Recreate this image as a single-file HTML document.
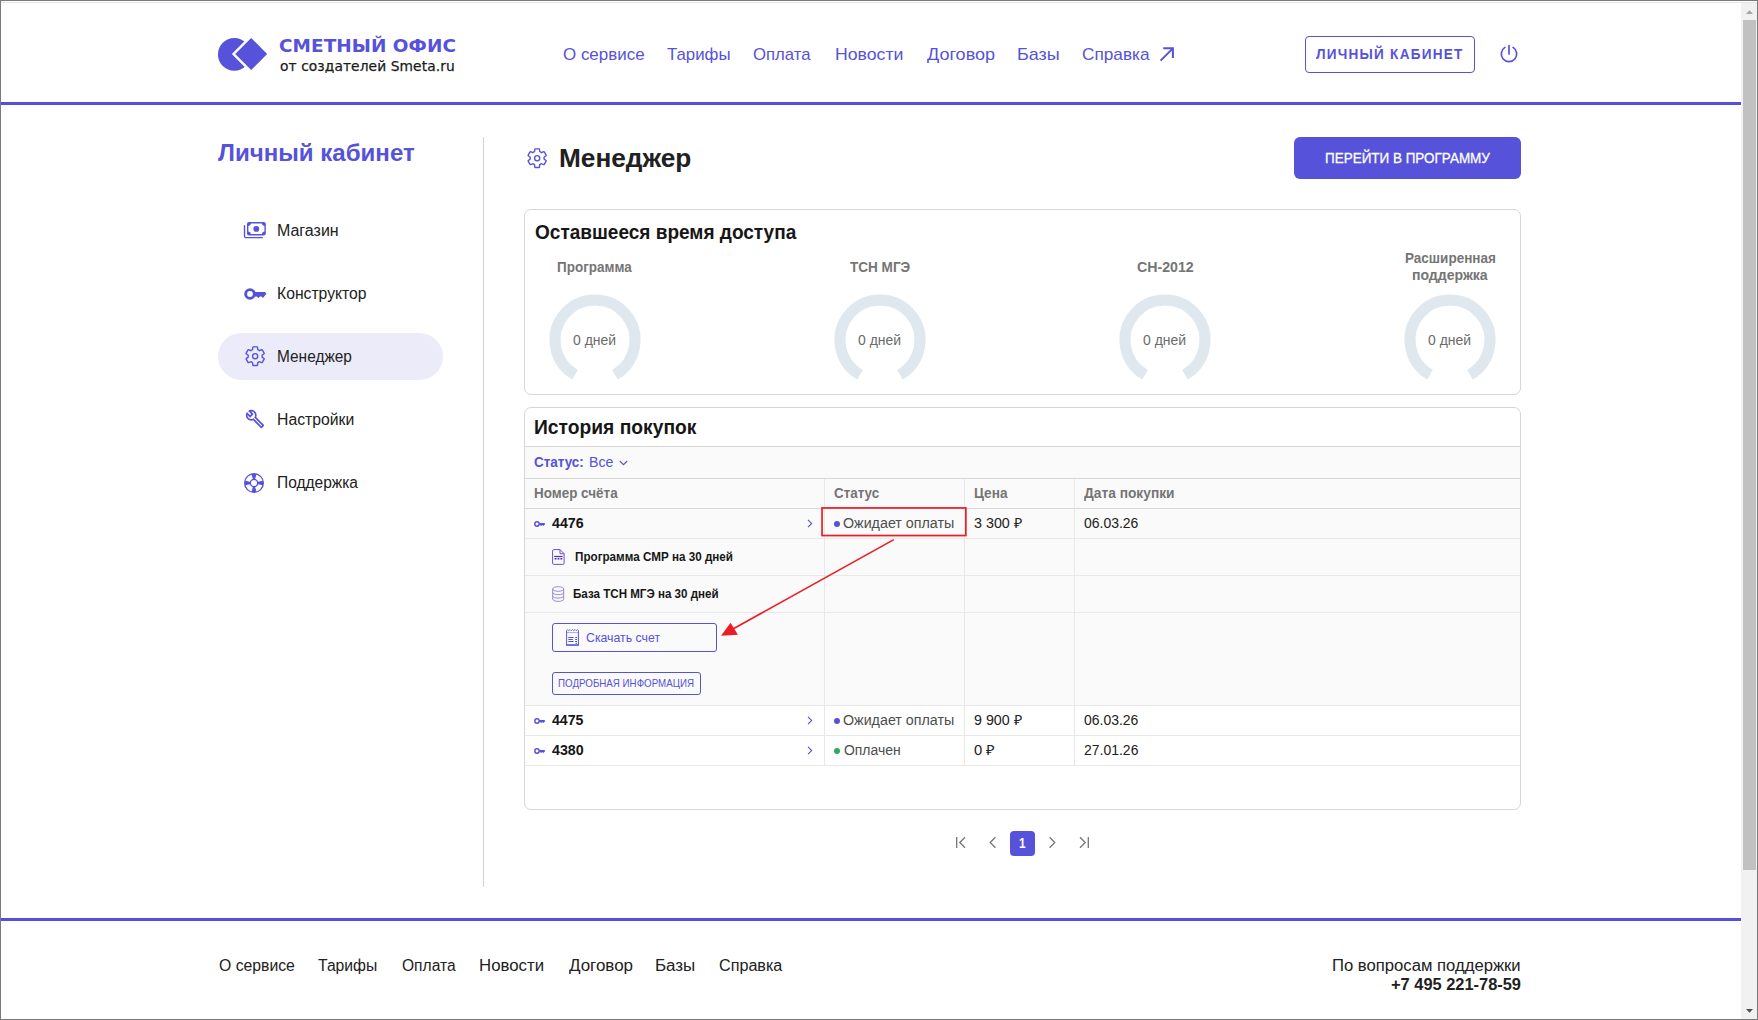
<!DOCTYPE html>
<html lang="ru">
<head>
<meta charset="utf-8">
<title>Сметный офис — Менеджер</title>
<style>
*{box-sizing:border-box;margin:0;padding:0}
html,body{width:1758px;height:1020px;overflow:hidden;background:#fff}
body{position:relative;font-family:"Liberation Sans",sans-serif;color:#212121}
.t{position:absolute;white-space:nowrap;line-height:1;font-weight:400;transform-origin:0 50%}
.b{font-weight:700}
.p{color:#5652d9}
.g{color:#757575}
.w{color:#fff}
.dj{font-family:"DejaVu Sans","Liberation Sans",sans-serif}
.abs{position:absolute}
svg{position:absolute;overflow:visible}
.hline{position:absolute;left:1px;width:1740px;height:3px;background:#5451d8}
.hl{left:0;width:995px;height:1px;background:#e8e8e8}
.vl{top:71px;width:1px;height:287px;background:#e8e8e8}
.dot{width:6px;height:6px;border-radius:50%}

#logo1{font-size:17.4px;top:38.27px;left:278.88px;letter-spacing:0.052px;transform:scaleX(1.0600)}
#logo2{font-size:13.4px;top:59.86px;left:280.34px;letter-spacing:0.091px;transform:scaleX(1.0300)}
#n1{font-size:17px;top:45.71px;left:563.08px;transform:scaleX(0.9972)}
#n2{font-size:17px;top:45.71px;left:667.46px;transform:scaleX(0.9892)}
#n3{font-size:17px;top:45.71px;left:753.48px;transform:scaleX(0.9833)}
#n4{font-size:17px;top:45.71px;left:834.70px;transform:scaleX(1.0390)}
#n5{font-size:17px;top:45.71px;left:926.80px;transform:scaleX(1.0607)}
#n6{font-size:17px;top:45.71px;left:1017.01px;transform:scaleX(1.0580)}
#n7{font-size:17px;top:45.71px;left:1081.96px;transform:scaleX(1.0120)}
#lk{font-size:14px;top:47.05px;left:1315.63px;letter-spacing:1.273px;transform:scaleX(0.9700)}
#sbtitle{font-size:24px;top:140.98px;left:218.44px;transform:scaleX(1.0031)}
#s1{font-size:16px;top:222.56px;left:276.76px;transform:scaleX(0.9985)}
#s2{font-size:16px;top:285.56px;left:276.76px;transform:scaleX(0.9812)}
#s3{font-size:16px;top:348.56px;left:276.77px;transform:scaleX(0.9646)}
#s4{font-size:16px;top:411.56px;left:276.76px;transform:scaleX(0.9845)}
#s5{font-size:16px;top:474.56px;left:276.59px;transform:scaleX(0.9698)}
#title{font-size:26.5px;top:145.37px;left:559.49px;transform:scaleX(0.9899)}
#gobtn{font-size:14px;top:151.05px;left:1324.80px;transform:scaleX(0.9621)}
#c1title{font-size:19.5px;top:223.39px;left:535.07px;transform:scaleX(0.9756)}
#g1l{font-size:14px;top:259.85px;left:557.20px;transform:scaleX(0.9618)}
#g2l{font-size:14px;top:259.85px;left:850.48px;transform:scaleX(0.9682)}
#g3l{font-size:14px;top:259.85px;left:1136.74px;transform:scaleX(1.0129)}
#g4la{font-size:14px;top:251.05px;left:1404.68px;transform:scaleX(0.9642)}
#g4lb{font-size:14px;top:267.85px;left:1412.00px;transform:scaleX(1.0025)}
#g1v{font-size:14px;top:332.65px;left:573.44px;transform:scaleX(0.9962)}
#g2v{font-size:14px;top:332.65px;left:858.44px;transform:scaleX(0.9962)}
#g3v{font-size:14px;top:332.65px;left:1143.44px;transform:scaleX(0.9962)}
#g4v{font-size:14px;top:332.65px;left:1428.44px;transform:scaleX(0.9962)}
#c2title{font-size:19.5px;top:418.49px;left:533.77px;transform:scaleX(0.9874)}
#flt1{font-size:14px;top:454.95px;left:533.64px;transform:scaleX(0.9603)}
#flt2{font-size:14px;top:454.95px;left:589.12px;transform:scaleX(1.0126)}
#th1{font-size:14px;top:486.05px;left:533.79px;transform:scaleX(0.9605)}
#th2{font-size:14px;top:486.05px;left:834.45px;transform:scaleX(0.9581)}
#th3{font-size:14px;top:486.05px;left:973.65px;transform:scaleX(0.9730)}
#th4{font-size:14px;top:486.05px;left:1084.14px;transform:scaleX(0.9823)}
#r1n{font-size:14px;top:516.05px;left:552.37px;transform:scaleX(1.0141)}
#r1s{font-size:14px;top:515.95px;left:843.35px;transform:scaleX(1.0193)}
#r1p{font-size:14px;top:515.95px;left:973.70px;transform:scaleX(1.0213)}
#r1d{font-size:14px;top:515.95px;left:1083.89px;transform:scaleX(0.9980)}
#sub1{font-size:12.5px;top:551.32px;left:575.19px;transform:scaleX(0.9328)}
#sub2{font-size:12.5px;top:587.62px;left:573.31px;transform:scaleX(0.9270)}
#dl{font-size:13px;top:631.00px;left:586.01px;transform:scaleX(0.9470)}
#info{font-size:10.2px;top:678.67px;left:558.23px;transform:scaleX(0.9578)}
#r2n{font-size:14px;top:713.15px;left:552.43px;transform:scaleX(1.0100)}
#r2s{font-size:14px;top:713.15px;left:843.35px;transform:scaleX(1.0193)}
#r2p{font-size:14px;top:713.15px;left:973.76px;transform:scaleX(1.0200)}
#r2d{font-size:14px;top:713.15px;left:1083.88px;transform:scaleX(0.9978)}
#r3n{font-size:14px;top:743.15px;left:552.37px;transform:scaleX(1.0180)}
#r3s{font-size:14px;top:743.15px;left:843.83px;transform:scaleX(0.9941)}
#r3p{font-size:14px;top:743.15px;left:974.45px;transform:scaleX(1.0570)}
#r3d{font-size:14px;top:743.15px;left:1083.87px;transform:scaleX(0.9984)}
#pg1{font-size:14px;top:836.25px;left:1018.60px;transform:scaleX(0.8414)}
#f1{font-size:16px;top:957.76px;left:218.50px;transform:scaleX(0.9849)}
#f2{font-size:16px;top:957.76px;left:318.28px;transform:scaleX(0.9808)}
#f3{font-size:16px;top:957.76px;left:402.32px;transform:scaleX(0.9734)}
#f4{font-size:16px;top:957.76px;left:479.46px;transform:scaleX(1.0496)}
#f5{font-size:16px;top:957.76px;left:568.51px;transform:scaleX(1.0601)}
#f6{font-size:16px;top:957.76px;left:655.46px;transform:scaleX(1.0588)}
#f7{font-size:16px;top:957.76px;left:719.10px;transform:scaleX(1.0089)}
#fs1{font-size:16px;top:957.76px;left:1332.28px;transform:scaleX(1.0413)}
#fs2{font-size:16px;top:976.76px;left:1391.05px;transform:scaleX(1.0252)}
</style>
</head>
<body>
<!-- window frame + scrollbar -->
<div class="abs" style="left:0;top:0;width:1758px;height:1px;background:#7a7a7a"></div>
<div class="abs" style="left:0;top:0;width:1px;height:1020px;background:#7a7a7a"></div>
<div class="abs" style="left:1757px;top:0;width:1px;height:1020px;background:#7a7a7a"></div>
<div class="abs" style="left:0;top:1019px;width:1758px;height:1px;background:#7a7a7a"></div>
<div class="abs" style="left:1px;top:2px;width:1756px;height:1px;background:#e4e6e4"></div>
<div class="abs" id="sbtrack" style="left:1741px;top:3px;width:16px;height:1016px;background:#f1f1f1"></div>
<div class="abs" id="sbthumb" style="left:1743px;top:20px;width:13px;height:850px;background:#c1c1c1"></div>
<svg style="left:1746px;top:10px" width="7" height="4" viewBox="0 0 9 5"><path d="M0 5 L4.5 0.3 L9 5Z" fill="#a3a3a3"/></svg>
<svg style="left:1746px;top:1009px" width="7" height="4" viewBox="0 0 9 5"><path d="M0 0 L4.5 4.7 L9 0Z" fill="#505050"/></svg>

<header>
  <a class="logo">
    <svg style="left:217px;top:37px" width="52" height="34" viewBox="0 0 52 34">
      <circle cx="17.3" cy="17.4" r="16.3" fill="#5652d9"/>
      <path d="M34.2 -2.4 L53.6 17 L34.2 36.4 L14.8 17Z" fill="#fff"/>
      <path d="M34.2 1 L50.2 17 L34.2 33 L18.2 17Z" fill="#5652d9"/>
    </svg>
    <span class="t b p dj" id="logo1">СМЕТНЫЙ ОФИС</span>
    <span class="t dj" id="logo2" style="color:#1b1b1b;-webkit-text-stroke:0.25px #1b1b1b">от создателей Smeta.ru</span>
  </a>
  <nav>
    <a class="t p" id="n1">О сервисе</a>
    <a class="t p" id="n2">Тарифы</a>
    <a class="t p" id="n3">Оплата</a>
    <a class="t p" id="n4">Новости</a>
    <a class="t p" id="n5">Договор</a>
    <a class="t p" id="n6">Базы</a>
    <a class="t p" id="n7">Справка</a>
    <svg style="left:1159px;top:47px" width="16" height="15" viewBox="0 0 16 15"><path d="M1.6 13.6 L13.6 1.6 M4.2 1.3 H13.9 V11" fill="none" stroke="#5652d9" stroke-width="2"/></svg>
  </nav>
  <a class="abs" style="left:1305px;top:36px;width:170px;height:37px;border:1px solid #5652d9;border-radius:4px"></a>
  <span class="t b p" id="lk">ЛИЧНЫЙ КАБИНЕТ</span>
  <svg style="left:1498.8px;top:44px" width="20" height="20" viewBox="0 0 20 20"><path d="M5.9 3.4 A7.7 7.7 0 1 0 14.1 3.4" fill="none" stroke="#5652d9" stroke-width="1.7" stroke-linecap="round"/><path d="M10 1.5 V10" stroke="#5652d9" stroke-width="1.7" stroke-linecap="round"/></svg>
  <div class="hline" style="top:102px"></div>
</header>
<aside>
  <h2 class="t b p" id="sbtitle">Личный кабинет</h2>
  <div class="abs" style="left:218px;top:333px;width:225px;height:47px;border-radius:24px;background:#ecebfa"></div>
  <ul style="list-style:none">
    <li><svg style="left:243px;top:221px" width="24" height="19" viewBox="0 0 24 19"><rect x="4.7" y="1.7" width="17.4" height="12.1" rx="1.6" fill="none" stroke="#5652d9" stroke-width="1.4"/><path d="M4.7 1.7h3.2a3.2 3.2 0 0 1-3.2 3.2zM22.1 1.7v3.2a3.2 3.2 0 0 1-3.2-3.2zM4.7 13.8v-3.2a3.2 3.2 0 0 1 3.2 3.2zM22.1 13.8h-3.2a3.2 3.2 0 0 1 3.2-3.2z" fill="#5652d9"/><circle cx="13.3" cy="7.9" r="2.9" fill="#5652d9"/><path d="M1.5 4.8V15.1a1.5 1.5 0 0 0 1.5 1.5H19.3" fill="none" stroke="#5652d9" stroke-width="1.4" stroke-linecap="round"/></svg><a class="t" id="s1">Магазин</a></li>
    <li><svg style="left:243.60px;top:288.10px" width="23.00" height="12.00" viewBox="-6 -6 23 12"><circle cx="0" cy="0" r="4.35" fill="none" stroke="#5652d9" stroke-width="2.9"/><path d="M4.90 -2.00 L15.00 -2.00 L16.40 -0.20 L13.00 3.90 L11.60 2.40 L10.00 2.40 L8.20 3.90 L6.80 2.40 L4.90 2.40Z" fill="#5652d9"/></svg><a class="t" id="s2">Конструктор</a></li>
    <li><svg style="left:243.65px;top:344.85px" width="22.3" height="22.3" viewBox="0 0 24 24"><path d="M19.43 12.98c.04-.32.07-.64.07-.98 0-.34-.03-.66-.07-.98l2.11-1.65c.19-.15.24-.42.12-.64l-2-3.46c-.09-.16-.26-.25-.44-.25-.06 0-.12.01-.17.03l-2.49 1c-.52-.4-1.08-.73-1.69-.98l-.38-2.65C14.46 2.18 14.25 2 14 2h-4c-.25 0-.46.18-.49.42l-.38 2.65c-.61.25-1.17.59-1.69.98l-2.49-1c-.06-.02-.12-.03-.18-.03-.17 0-.34.09-.43.25l-2 3.46c-.13.22-.07.49.12.64l2.11 1.65c-.04.32-.07.65-.07.98 0 .33.03.66.07.98l-2.11 1.65c-.19.15-.24.42-.12.64l2 3.46c.09.16.26.25.44.25.06 0 .12-.01.17-.03l2.49-1c.52.4 1.08.73 1.69.98l.38 2.65c.03.24.24.42.49.42h4c.25 0 .46-.18.49-.42l.38-2.65c.61-.25 1.17-.59 1.69-.98l2.49 1c.06.02.12.03.18.03.17 0 .34-.09.43-.25l2-3.46c.12-.22.07-.49-.12-.64l-2.11-1.65z" fill="none" stroke="#5652d9" stroke-width="1.5" stroke-linejoin="miter"/><circle cx="12" cy="12" r="2.75" fill="none" stroke="#5652d9" stroke-width="1.5"/></svg><a class="t" id="s3">Менеджер</a></li>
    <li><svg style="left:244.6px;top:409.4px" width="20" height="20" viewBox="0 0 24 24"><path fill="#5652d9" d="M22.61 18.99l-9.08-9.08c.93-2.34.45-5.1-1.44-7C9.79.61 6.21.4 3.66 2.26L7.5 6.11 6.08 7.52 2.25 3.69C.39 6.23.6 9.82 2.9 12.11c1.86 1.86 4.57 2.35 6.89 1.48l9.11 9.11c.39.39 1.02.39 1.41 0l2.3-2.3c.4-.38.4-1.01 0-1.41zm-3 1.6l-9.46-9.46c-.61.45-1.29.72-2 .82-1.36.2-2.79-.21-3.83-1.25C3.37 9.76 2.93 8.5 3 7.26l3.09 3.09 4.24-4.24-3.09-3.09c1.24-.07 2.49.37 3.44 1.31 1.08 1.08 1.49 2.57 1.24 3.96-.12.71-.42 1.37-.88 1.96l9.45 9.45-.88.89z"/></svg><a class="t" id="s4">Настройки</a></li>
    <li><svg style="left:243.30px;top:471.60px" width="22" height="22" viewBox="-11 -11 22 22"><circle r="9.35" fill="none" stroke="#5652d9" stroke-width="1.3"/><circle r="3.7" fill="none" stroke="#5652d9" stroke-width="1.3"/><path d="M-0.99 -3.46 L-2.59 -9.04 L2.59 -9.04 L0.99 -3.46Z M3.46 -0.99 L9.04 -2.59 L9.04 2.59 L3.46 0.99Z M0.99 3.46 L2.59 9.04 L-2.59 9.04 L-0.99 3.46Z M-3.46 0.99 L-9.04 2.59 L-9.04 -2.59 L-3.46 -0.99Z" fill="#5652d9"/></svg><a class="t" id="s5">Поддержка</a></li>
  </ul>
  <div class="abs" style="left:483px;top:137px;width:1px;height:750px;background:#d2d2d2"></div>
</aside>
<main>
  <svg style="left:525.55px;top:146.85px" width="22.3" height="22.3" viewBox="0 0 24 24"><path d="M19.43 12.98c.04-.32.07-.64.07-.98 0-.34-.03-.66-.07-.98l2.11-1.65c.19-.15.24-.42.12-.64l-2-3.46c-.09-.16-.26-.25-.44-.25-.06 0-.12.01-.17.03l-2.49 1c-.52-.4-1.08-.73-1.69-.98l-.38-2.65C14.46 2.18 14.25 2 14 2h-4c-.25 0-.46.18-.49.42l-.38 2.65c-.61.25-1.17.59-1.69.98l-2.49-1c-.06-.02-.12-.03-.18-.03-.17 0-.34.09-.43.25l-2 3.46c-.13.22-.07.49.12.64l2.11 1.65c-.04.32-.07.65-.07.98 0 .33.03.66.07.98l-2.11 1.65c-.19.15-.24.42-.12.64l2 3.46c.09.16.26.25.44.25.06 0 .12-.01.17-.03l2.49-1c.52.4 1.08.73 1.69.98l.38 2.65c.03.24.24.42.49.42h4c.25 0 .46-.18.49-.42l.38-2.65c.61-.25 1.17-.59 1.69-.98l2.49 1c.06.02.12.03.18.03.17 0 .34-.09.43-.25l2-3.46c.12-.22.07-.49-.12-.64l-2.11-1.65z" fill="none" stroke="#5652d9" stroke-width="1.5" stroke-linejoin="miter"/><circle cx="12" cy="12" r="2.75" fill="none" stroke="#5652d9" stroke-width="1.5"/></svg>
  <h1 class="t b" id="title">Менеджер</h1>
  <a class="abs" style="left:1294px;top:137px;width:227px;height:42px;border-radius:6px;background:#5652d9"></a>
  <span class="t w" id="gobtn" style="-webkit-text-stroke:0.3px #fff">ПЕРЕЙТИ В ПРОГРАММУ</span>

  <section class="abs" style="left:524px;top:209px;width:997px;height:186px;border:1px solid #d6d6d6;border-radius:7px"></section>
  <h3 class="t b" id="c1title" style="color:#161616">Оставшееся время доступа</h3>
  <span class="t b g" id="g1l">Программа</span>
  <span class="t b g" id="g2l">ТСН МГЭ</span>
  <span class="t b g" id="g3l">СН-2012</span>
  <span class="t b g" id="g4la">Расширенная</span>
  <span class="t b g" id="g4lb">поддержка</span>
  <svg style="left:545px;top:289.6px" width="100" height="100" viewBox="-50 -50 100 100"><path d="M-20 34.64 A40 40 0 1 1 20 34.64" fill="none" stroke="#dfe7ef" stroke-width="11"/></svg>
  <svg style="left:830px;top:289.6px" width="100" height="100" viewBox="-50 -50 100 100"><path d="M-20 34.64 A40 40 0 1 1 20 34.64" fill="none" stroke="#dfe7ef" stroke-width="11"/></svg>
  <svg style="left:1115px;top:289.6px" width="100" height="100" viewBox="-50 -50 100 100"><path d="M-20 34.64 A40 40 0 1 1 20 34.64" fill="none" stroke="#dfe7ef" stroke-width="11"/></svg>
  <svg style="left:1400px;top:289.6px" width="100" height="100" viewBox="-50 -50 100 100"><path d="M-20 34.64 A40 40 0 1 1 20 34.64" fill="none" stroke="#dfe7ef" stroke-width="11"/></svg>
  <span class="t" id="g1v" style="color:#6b6b6b">0 дней</span>
  <span class="t" id="g2v" style="color:#6b6b6b">0 дней</span>
  <span class="t" id="g3v" style="color:#6b6b6b">0 дней</span>
  <span class="t" id="g4v" style="color:#6b6b6b">0 дней</span>
  <section class="abs" id="card2" style="left:524px;top:407px;width:997px;height:403px;border:1px solid #d6d6d6;border-radius:7px;overflow:hidden">
    <div class="abs" style="left:0;top:39px;width:995px;height:259px;background:#fafafa"></div>
    <div class="abs hl" style="top:38px;background:#d6d6d6"></div>
    <div class="abs hl" style="top:70px;background:#d6d6d6"></div>
    <div class="abs hl" style="top:100px;background:#d6d6d6"></div>
    <div class="abs hl" style="top:130px"></div>
    <div class="abs hl" style="top:167px"></div>
    <div class="abs hl" style="top:204px"></div>
    <div class="abs hl" style="top:297px"></div>
    <div class="abs hl" style="top:327px"></div>
    <div class="abs hl" style="top:357px"></div>
    <div class="abs vl" style="left:299px"></div>
    <div class="abs vl" style="left:439px"></div>
    <div class="abs vl" style="left:549px"></div>
  </section>
  <h3 class="t b" id="c2title" style="color:#161616">История покупок</h3>
  <span class="t b p" id="flt1">Статус:</span>
  <span class="t p" id="flt2">Все</span>
  <svg style="left:618.5px;top:460px" width="9" height="6" viewBox="0 0 9 6"><path d="M0.8 1 L4.5 4.7 L8.2 1" fill="none" stroke="#5652d9" stroke-width="1.1"/></svg>
  <span class="t b g" id="th1">Номер счёта</span>
  <span class="t b g" id="th2">Статус</span>
  <span class="t b g" id="th3">Цена</span>
  <span class="t b g" id="th4">Дата покупки</span>

  <!-- row 4476 -->
  <svg style="left:534.00px;top:520.60px" width="11.50" height="6.00" viewBox="-6 -6 23 12"><circle cx="0" cy="0" r="4.35" fill="none" stroke="#5652d9" stroke-width="2.9"/><path d="M4.90 -2.00 L15.00 -2.00 L16.40 -0.20 L13.00 3.90 L11.60 2.40 L10.00 2.40 L8.20 3.90 L6.80 2.40 L4.90 2.40Z" fill="#5652d9"/></svg>
  <span class="t b" id="r1n" style="color:#161616">4476</span>
  <svg style="left:806.9px;top:519.0px" width="6" height="9" viewBox="0 0 6 9"><path d="M1 0.8 L4.7 4.5 L1 8.2" fill="none" stroke="#5652d9" stroke-width="1.1"/></svg>
  <span class="abs dot" style="left:834px;top:520.5px;background:#5652d9"></span>
  <span class="t" id="r1s" style="color:#4d4d4d">Ожидает оплаты</span>
  <span class="t" id="r1p">3 300 ₽</span>
  <span class="t" id="r1d">06.03.26</span>
  <svg style="left:551.5px;top:549px" width="13" height="16" viewBox="0 0 13 16"><path d="M1.8 0.6 H8 L12.1 4.7 V14.2 A1.2 1.2 0 0 1 10.9 15.4 H1.8 A1.2 1.2 0 0 1 0.6 14.2 V1.8 A1.2 1.2 0 0 1 1.8 0.6Z M8 0.6 V4.7 H12.1" fill="none" stroke="#6d52c9" stroke-width="1"/><path d="M2.2 7.5 H10.6" stroke="#4b30b3" stroke-width="1.2"/><path d="M2.6 9.8 H10.4" stroke="#4b30b3" stroke-width="1.5" stroke-dasharray="1.9 1"/></svg>
  <span class="t b" id="sub1" style="color:#161616">Программа СМР на 30 дней</span>
  <svg style="left:551.5px;top:586px" width="13" height="16" viewBox="0 0 13 16"><path d="M0.7 3 V13 C0.7 14.4 3.1 15.4 6.2 15.4 C9.3 15.4 11.7 14.4 11.7 13 V3 M0.7 6.4 C0.7 7.8 3.1 8.7 6.2 8.7 C9.3 8.7 11.7 7.8 11.7 6.4 M0.7 9.8 C0.7 11.2 3.1 12.1 6.2 12.1 C9.3 12.1 11.7 11.2 11.7 9.8" fill="none" stroke="#9c8ad6" stroke-width="1"/><ellipse cx="6.2" cy="3" rx="5.5" ry="2.3" fill="none" stroke="#9c8ad6" stroke-width="1"/></svg>
  <span class="t b" id="sub2" style="color:#161616">База ТСН МГЭ на 30 дней</span>
  <a class="abs" style="left:552px;top:622.5px;width:165px;height:29.5px;border:1px solid #5652d9;border-radius:3px"></a>
  <svg style="left:566px;top:629px" width="13" height="18" viewBox="0 0 13 18"><path d="M0.6 1.6 V16 H12.4 V1.6" fill="none" stroke="#5652d9" stroke-width="1"/><path d="M0.1 16.1 H12.9" stroke="#5652d9" stroke-width="1.2"/><path d="M0.6 1.7 L1.6 0.5 L2.8 1.7 L4 0.5 L5.2 1.7 L6.5 0.5 L7.8 1.7 L9 0.5 L10.2 1.7 L11.4 0.5 L12.4 1.7" fill="none" stroke="#5652d9" stroke-width="0.8"/><path d="M1 3.5 H12" stroke="#5652d9" stroke-width="0.45"/><path d="M2.3 8.5 H7.6 M2.3 10.5 H6.8 M2.3 12.5 H7.6 M9.2 8.5 H11 M9.2 10.5 H11 M9.2 12.5 H11 M9.6 14.3 H11" stroke="#5652d9" stroke-width="1"/></svg>
  <span class="t p" id="dl">Скачать счет</span>
  <a class="abs" style="left:552px;top:672px;width:149px;height:23px;border:1px solid #5652d9;border-radius:3px"></a>
  <span class="t p" id="info">ПОДРОБНАЯ ИНФОРМАЦИЯ</span>

  <!-- row 4475 -->
  <svg style="left:534.00px;top:717.60px" width="11.50" height="6.00" viewBox="-6 -6 23 12"><circle cx="0" cy="0" r="4.35" fill="none" stroke="#5652d9" stroke-width="2.9"/><path d="M4.90 -2.00 L15.00 -2.00 L16.40 -0.20 L13.00 3.90 L11.60 2.40 L10.00 2.40 L8.20 3.90 L6.80 2.40 L4.90 2.40Z" fill="#5652d9"/></svg>
  <span class="t b" id="r2n" style="color:#161616">4475</span>
  <svg style="left:806.9px;top:716.0px" width="6" height="9" viewBox="0 0 6 9"><path d="M1 0.8 L4.7 4.5 L1 8.2" fill="none" stroke="#5652d9" stroke-width="1.1"/></svg>
  <span class="abs dot" style="left:834px;top:717.5px;background:#5652d9"></span>
  <span class="t" id="r2s" style="color:#4d4d4d">Ожидает оплаты</span>
  <span class="t" id="r2p">9 900 ₽</span>
  <span class="t" id="r2d">06.03.26</span>
  <!-- row 4380 -->
  <svg style="left:534.00px;top:747.60px" width="11.50" height="6.00" viewBox="-6 -6 23 12"><circle cx="0" cy="0" r="4.35" fill="none" stroke="#5652d9" stroke-width="2.9"/><path d="M4.90 -2.00 L15.00 -2.00 L16.40 -0.20 L13.00 3.90 L11.60 2.40 L10.00 2.40 L8.20 3.90 L6.80 2.40 L4.90 2.40Z" fill="#5652d9"/></svg>
  <span class="t b" id="r3n" style="color:#161616">4380</span>
  <svg style="left:806.9px;top:746.0px" width="6" height="9" viewBox="0 0 6 9"><path d="M1 0.8 L4.7 4.5 L1 8.2" fill="none" stroke="#5652d9" stroke-width="1.1"/></svg>
  <span class="abs dot" style="left:834px;top:747.5px;background:#2fab5c"></span>
  <span class="t" id="r3s" style="color:#4d4d4d">Оплачен</span>
  <span class="t" id="r3p">0 ₽</span>
  <span class="t" id="r3d">27.01.26</span>

  <!-- annotation -->
  <svg style="left:815px;top:500px" width="160" height="45" viewBox="815 500 160 45"><rect x="822.05" y="507.95" width="143.8" height="27.6" fill="none" stroke="#ed1c24" stroke-width="1.7"/></svg>
  <svg style="left:700px;top:530px" width="220" height="130" viewBox="0 0 220 130"><path d="M193.8 9.6 L32 99.5" stroke="#ed1c24" stroke-width="1.6" fill="none"/><path d="M21 105.8 L30.6 92.8 L37.9 104.8Z" fill="#ed1c24"/></svg>

  <!-- pagination -->
  <svg style="left:955px;top:836px" width="12" height="13" viewBox="0 0 12 13"><path d="M1.7 1 V12 M10 1.3 L4.8 6.5 L10 11.7" fill="none" stroke="#757575" stroke-width="1.3"/></svg>
  <svg style="left:988px;top:836px" width="9" height="13" viewBox="0 0 9 13"><path d="M7.4 1.3 L2.2 6.5 L7.4 11.7" fill="none" stroke="#757575" stroke-width="1.3"/></svg>
  <span class="abs" style="left:1010px;top:831px;width:25px;height:25px;border-radius:4px;background:#5652d9"></span>
  <span class="t b w" id="pg1">1</span>
  <svg style="left:1048px;top:836px" width="9" height="13" viewBox="0 0 9 13"><path d="M1.6 1.3 L6.8 6.5 L1.6 11.7" fill="none" stroke="#757575" stroke-width="1.3"/></svg>
  <svg style="left:1078px;top:836px" width="12" height="13" viewBox="0 0 12 13"><path d="M10.3 1 V12 M2 1.3 L7.2 6.5 L2 11.7" fill="none" stroke="#757575" stroke-width="1.3"/></svg>
</main>

<footer>
  <div class="hline" style="top:918px"></div>
  <a class="t" id="f1">О сервисе</a>
  <a class="t" id="f2">Тарифы</a>
  <a class="t" id="f3">Оплата</a>
  <a class="t" id="f4">Новости</a>
  <a class="t" id="f5">Договор</a>
  <a class="t" id="f6">Базы</a>
  <a class="t" id="f7">Справка</a>
  <span class="t" id="fs1">По вопросам поддержки</span>
  <span class="t b" id="fs2">+7 495 221-78-59</span>
</footer>

</body>
</html>
